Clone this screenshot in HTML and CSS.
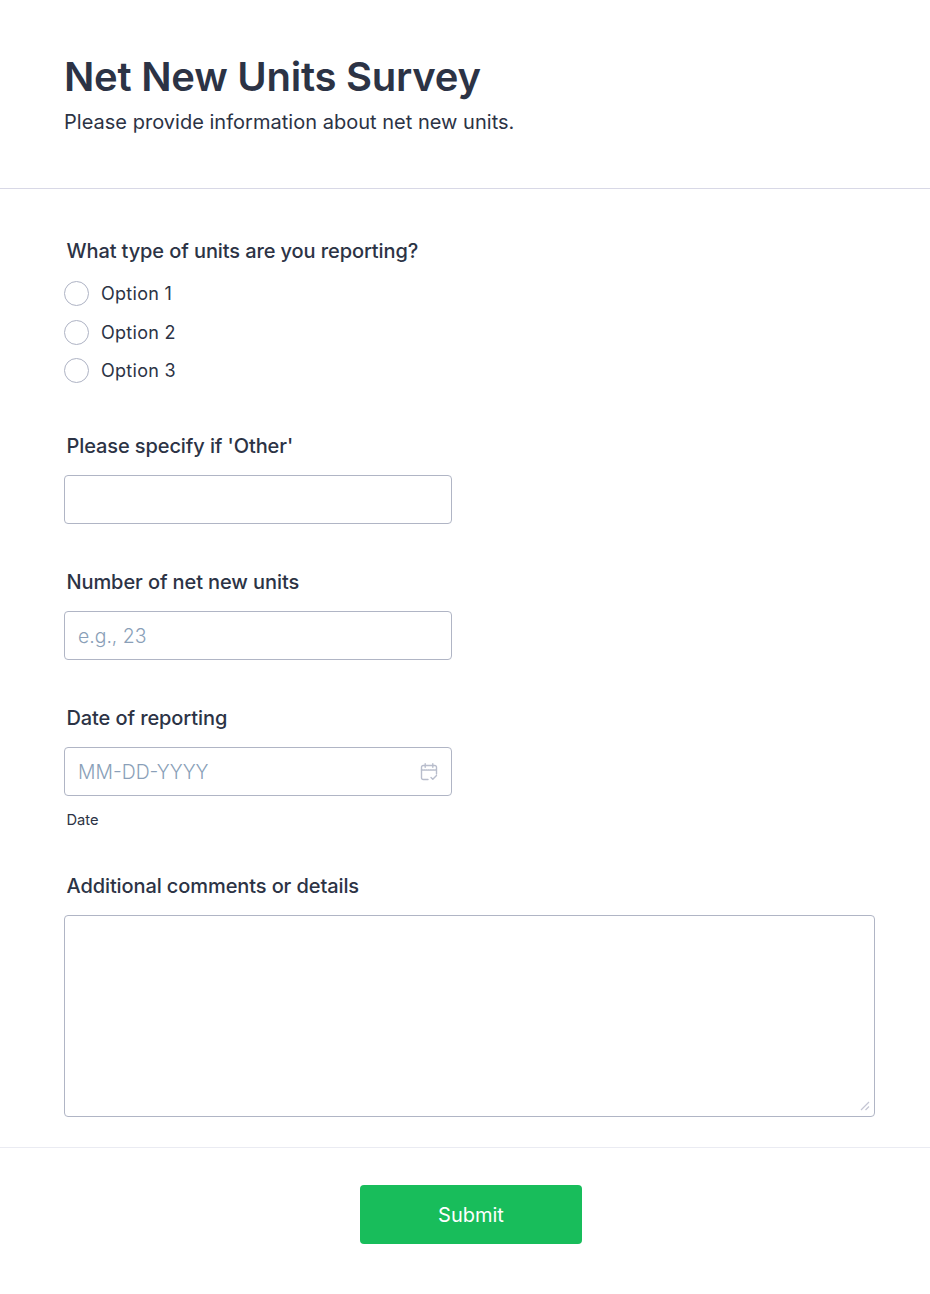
FILE: index.html
```html
<!DOCTYPE html>
<html lang="en">
<head>
<meta charset="utf-8">
<title>Net New Units Survey</title>
<link rel="stylesheet" href="styles.css">
</head>
<body>
<form class="form">
  <header class="header">
    <h1 class="title">Net New Units Survey</h1>
    <p class="subtitle">Please provide information about net new units.</p>
  </header>
  <div class="fields">
    <fieldset class="field field-radio">
      <legend class="label">What type of units are you reporting?</legend>
      <div class="options">
        <label class="option"><input class="radio" type="radio" name="type"><span>Option 1</span></label>
        <label class="option"><input class="radio" type="radio" name="type"><span>Option 2</span></label>
        <label class="option"><input class="radio" type="radio" name="type"><span>Option 3</span></label>
      </div>
    </fieldset>
    <div class="field">
      <label class="label" for="other">Please specify if 'Other'</label>
      <input class="input" id="other" type="text">
    </div>
    <div class="field">
      <label class="label" for="count">Number of net new units</label>
      <input class="input" id="count" type="text" placeholder="e.g., 23">
    </div>
    <div class="field field-date">
      <label class="label" for="date">Date of reporting</label>
      <div class="date-wrap">
        <input class="input" id="date" type="text" placeholder="MM-DD-YYYY">
        <svg class="date-icon" viewBox="0 0 18 18" width="18" height="18" fill="none" stroke="#b8bdcc" stroke-width="1.4" stroke-linecap="round" stroke-linejoin="round" aria-hidden="true">
          <path d="M8 16.5H3.2A1.7 1.7 0 0 1 1.5 14.8V4.2a1.7 1.7 0 0 1 1.7-1.7h11.6a1.7 1.7 0 0 1 1.7 1.7v6.8"/>
          <path d="M5.2 .8v3.4M12.8 .8v3.4"/>
          <path d="M1.5 7h15" stroke-dasharray="1.2 1"/>
          <path d="M11 14.5l1.8 1.8 3.7-3.8"/>
        </svg>
      </div>
      <span class="sublabel">Date</span>
    </div>
    <div class="field field-comments">
      <label class="label" for="comments">Additional comments or details</label>
      <div class="textarea-wrap">
        <textarea class="textarea" id="comments"></textarea>
        <svg class="grip" viewBox="0 0 10 10" width="10" height="10" fill="none" stroke="#c4c6d4" stroke-width="1.2" aria-hidden="true">
          <path d="M1 9L9 1M5.5 9L9 5.5"/>
        </svg>
      </div>
    </div>
  </div>
  <footer class="footer">
    <button class="submit" type="button">Submit</button>
  </footer>
</form>
</body>
</html>
```
FILE: styles.css
```css
* { box-sizing: border-box; }
html, body { margin: 0; background: #fff; }
body { font-family: Inter, "Liberation Sans", sans-serif; color: #2c3345; }
.form { width: 930px; height: 1294px; display: flex; flex-direction: column; }
.header { height: 189px; padding: 52px 64px 0; border-bottom: 1px solid #d8d8e6; }
.title { margin: 0; font-size: 40px; line-height: 50px; font-weight: 600; letter-spacing: -0.25px; color: #2c3345; }
.subtitle { margin: 2px 0 0; font-size: 20px; line-height: 36px; font-weight: 400; letter-spacing: 0.02px; color: #2c3345; }
.fields { padding: 47px 55px 0 64px; }
.field { margin: 0 0 43px; padding: 0; border: 0; }
.label { display: block; padding: 0 0 0 2.5px; margin: 0 0 14px; font-size: 20px; line-height: 30px; font-weight: 500; letter-spacing: -0.1px; color: #2c3345; }
.field-radio { margin-bottom: 41px; }
.field-radio .label { margin-bottom: 8.5px; }
.options { display: flex; flex-direction: column; }
.option { display: flex; align-items: center; gap: 12px; height: 38.5px; font-size: 18px; letter-spacing: 0.28px; color: #2c3345; }
.radio { appearance: none; width: 25px; height: 25px; margin: 0; border: 1px solid #aeb3c4; border-radius: 50%; background: #fff; }
.input { display: block; width: 388px; height: 49px; padding: 0 13px; border: 1px solid #b0b5c5; border-radius: 4px; background: #fff; font: 300 19.4px Inter, sans-serif; color: #2c3345; outline: none; }
.input::placeholder { color: #8a9fb8; opacity: 1; }
.date-wrap { position: relative; width: 388px; }
.date-icon { position: absolute; left: 356px; top: 15.5px; }
.sublabel { display: block; margin: 15px 0 0 2.5px; font-size: 14.7px; line-height: 18px; color: #2c3345; }
.field-date { margin-bottom: 42px; }
.field-comments { margin-bottom: 30px; }
.textarea-wrap { position: relative; width: 811px; }
.textarea { display: block; width: 811px; height: 202px; padding: 10px 13px; border: 1px solid #b0b5c5; border-radius: 4px; background: #fff; font: 400 18px Inter, sans-serif; outline: none; resize: none; }
.grip { position: absolute; right: 5px; bottom: 6px; }
.footer { border-top: 1px solid #eaebf2; padding-top: 37px; display: flex; justify-content: center; padding-left: 12px; }
.submit { width: 222px; height: 59px; border: 0; border-radius: 4px; background: #18bd5b; color: #fff; font: 400 20px Inter, sans-serif; }
```
